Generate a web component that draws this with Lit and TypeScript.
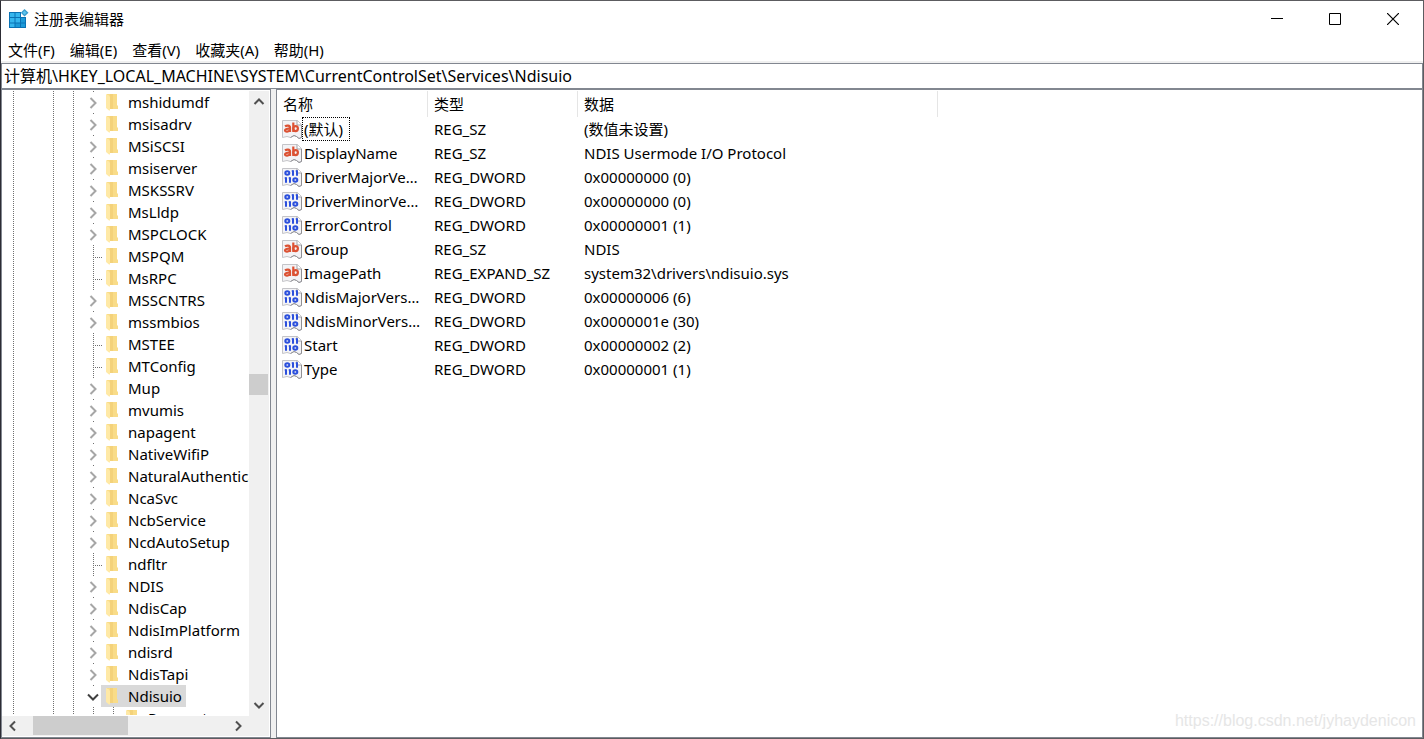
import { LitElement, html, svg, css } from "lit";
import { customElement, property } from "lit/decorators.js";
import { classMap } from "lit/directives/class-map.js";

type TreeNode = { name: string; kind: "closed" | "open" | "leaf"; child?: boolean };
type RegValue = { name: string; type: string; data: string };

const closed = (name: string): TreeNode => ({ name, kind: "closed" });
const leaf = (name: string): TreeNode => ({ name, kind: "leaf" });

const NODES: TreeNode[] = [
  closed("mshidumdf"),
  closed("msisadrv"),
  closed("MSiSCSI"),
  closed("msiserver"),
  closed("MSKSSRV"),
  closed("MsLldp"),
  closed("MSPCLOCK"),
  leaf("MSPQM"),
  leaf("MsRPC"),
  closed("MSSCNTRS"),
  closed("mssmbios"),
  leaf("MSTEE"),
  leaf("MTConfig"),
  closed("Mup"),
  closed("mvumis"),
  closed("napagent"),
  closed("NativeWifiP"),
  closed("NaturalAuthentication"),
  closed("NcaSvc"),
  closed("NcbService"),
  closed("NcdAutoSetup"),
  leaf("ndfltr"),
  closed("NDIS"),
  closed("NdisCap"),
  closed("NdisImPlatform"),
  closed("ndisrd"),
  closed("NdisTapi"),
  { name: "Ndisuio", kind: "open" },
  { name: "Parameters", kind: "leaf", child: true },
];

const VALUES: RegValue[] = [
  { name: "(默认)", type: "REG_SZ", data: "(数值未设置)" },
  { name: "DisplayName", type: "REG_SZ", data: "NDIS Usermode I/O Protocol" },
  { name: "DriverMajorVersion", type: "REG_DWORD", data: "0x00000000 (0)" },
  { name: "DriverMinorVersion", type: "REG_DWORD", data: "0x00000000 (0)" },
  { name: "ErrorControl", type: "REG_DWORD", data: "0x00000001 (1)" },
  { name: "Group", type: "REG_SZ", data: "NDIS" },
  { name: "ImagePath", type: "REG_EXPAND_SZ", data: "system32\\drivers\\ndisuio.sys" },
  { name: "NdisMajorVersion", type: "REG_DWORD", data: "0x00000006 (6)" },
  { name: "NdisMinorVersion", type: "REG_DWORD", data: "0x0000001e (30)" },
  { name: "Start", type: "REG_DWORD", data: "0x00000002 (2)" },
  { name: "Type", type: "REG_DWORD", data: "0x00000001 (1)" },
];

const base = css`
  :host {
    box-sizing: border-box;
    font: 15px/22px "Noto Sans", "Noto Sans CJK SC", sans-serif;
    color: #000;
  }
  *,
  *::before {
    box-sizing: border-box;
  }
  button {
    margin: 0;
    padding: 0;
    border: 0;
    background: none;
    color: inherit;
    font: inherit;
  }
  svg {
    display: block;
    flex: none;
  }
`;

const folderIcon = html`<svg width="12" height="18" viewBox="0 0 12 18" aria-hidden="true">
  <path d="M1 1H11V12L12 13V16H1Z" fill="#f9dc88" />
  <path d="M4 1H7V16H4Z" fill="#f4d27a" />
  <path d="M0 1L3 2.5L4 4V17.5L3 17.5L0 15Z" fill="#ffe9a6" />
</svg>`;

const page = svg`
  <path d="M.5 1.5H15.5L19.5 5.5V18.5L17 19.5L14.5 17.5L12 16.5L8.5 18.5L5 17.5L.5 18.5Z" fill="#f3f3f6" stroke="#c4c4c8"/>
  <path d="M15 1.5V6H19.5" fill="#fff" stroke="#a4a4a8"/>
  <path d="M19.5 6V18.5L17 19.5L14.5 17.5L12 16.5L8.5 18.5" fill="none" stroke="#909094"/>`;

const stringIcon = html`<svg width="20" height="20" viewBox="0 0 20 20" aria-hidden="true">
  ${page}
  <g fill="none" stroke="#dc5234" stroke-width="2.2">
    <path d="M3 7.3C4.5 6.3 8 6 8 8.5V13M8 9.8C5 9.5 3 10 3 11.3C3 13.3 7 12.8 8 11" />
    <path d="M11.3 3.5V13" />
    <ellipse cx="13.6" cy="9.6" rx="2.3" ry="2.5" />
  </g>
</svg>`;

const binaryIcon = html`<svg width="20" height="20" viewBox="0 0 20 20" aria-hidden="true">
  ${page}
  <g fill="none" stroke="#2c50dc" stroke-width="2">
    <ellipse cx="5.3" cy="6" rx="2" ry="1.7" />
    <path d="M11 3.3V8.7M15 3.3V8.7" />
    <path d="M4 10.3V15.7M8 10.3V15.7" />
    <ellipse cx="13.3" cy="13" rx="2" ry="1.7" />
    <path d="M9.6 4H11M13.6 4H15M2.6 11H4M6.6 11H8" stroke-width="1" />
  </g>
</svg>`;

const regeditIcon = html`<svg width="20" height="20" viewBox="0 0 20 20" aria-hidden="true">
  <path d="M0 3H12V8H17V19H0Z" fill="#0a72b4" />
  <path
    d="M1 4H5.5V8H1ZM6.5 4H11V8H6.5ZM1 9H5.5V13.5H1ZM6.5 9H11V13.5H6.5ZM1 14.5H5.5V18H1Z"
    fill="#35b6ee"
  />
  <path d="M6.5 14.5H11V18H6.5ZM12 14.5H16V18H12ZM12 9H16V13.5H12Z" fill="#1c9ad8" />
  <path d="M15.5 0L19.5 3.8L15.5 7.6L11.8 3.8Z" fill="#3a9ccc" />
  <path d="M15.5 1.8L17.6 3.8L15.5 5.8L13.5 3.8Z" fill="#5cc4ee" />
</svg>`;

@customElement("reg-scrollbar")
export class RegScrollbar extends LitElement {
  @property({ type: Boolean, reflect: true }) horizontal = false;
  @property({ type: Number }) before = 0;
  @property({ type: Number }) size = 0;

  static styles = [
    base,
    css`
      :host {
        display: flex;
        flex-direction: column;
        background: #f0f0f0;
        width: 20px;
      }
      :host([horizontal]) {
        flex-direction: row;
        width: auto;
        height: 20px;
      }
      .arrow {
        flex: none;
        display: grid;
        place-items: center;
        width: 19px;
        height: 22px;
      }
      :host([horizontal]) .arrow {
        width: 22px;
        height: 20px;
      }
      .track {
        flex: 1;
        display: flex;
        flex-direction: inherit;
        align-items: stretch;
      }
      .thumb {
        margin-right: 1px;
        background: #cdcdcd;
      }
      :host([horizontal]) .thumb {
        margin: 0 0 1px;
      }
    `,
  ];

  private arrow(d: string, label: string) {
    return html`<button class="arrow" aria-label=${label}>
      <svg width="12" height="12" viewBox="0 0 12 12">
        <path d=${d} fill="none" stroke="#505050" stroke-width="2" />
      </svg>
    </button>`;
  }

  render() {
    const h = this.horizontal;
    return html`
      ${h ? this.arrow("M8 1.5L3.5 6L8 10.5", "向左") : this.arrow("M1.5 8L6 3.5L10.5 8", "向上")}
      <div class="track">
        <div style="flex: ${this.before} 0 0"></div>
        <div class="thumb" style="flex: ${this.size} 0 0"></div>
        <div style="flex: ${100 - this.before - this.size} 0 0"></div>
      </div>
      ${h ? this.arrow("M4 1.5L8.5 6L4 10.5", "向右") : this.arrow("M1.5 4L6 8.5L10.5 4", "向下")}
    `;
  }
}

@customElement("reg-tree")
export class RegTree extends LitElement {
  static styles = [
    base,
    css`
      :host {
        display: grid;
        grid-template: minmax(0, 1fr) auto / minmax(0, 1fr) auto;
        border: 1px solid #828790;
        padding: 1px 1px 1px 0;
        min-height: 0;
      }
      .tree {
        overflow: hidden;
        list-style: none;
        margin: 0;
        padding: 0 0 0 1px;
        border-bottom: 1px solid #fff;
      }
      .row {
        display: flex;
        height: 22px;
        white-space: nowrap;
      }
      .cell {
        position: relative;
        flex: none;
        width: 20px;
      }
      .line::before {
        content: "";
        position: absolute;
        inset: 0 auto 0 10px;
        width: 1px;
        background: repeating-linear-gradient(#707070 0 1px, transparent 1px 2px);
      }
      .twist {
        width: 18px;
      }
      .stub::before {
        bottom: auto;
        height: 1px;
      }
      .tick {
        position: absolute;
        top: 12px;
        left: 12px;
        width: 7px;
        height: 1px;
        background: repeating-linear-gradient(90deg, #707070 0 1px, transparent 1px 2px);
      }
      .toggle {
        display: grid;
        place-items: center;
        width: 20px;
        height: 22px;
        padding-top: 2px;
      }
      .label {
        display: flex;
        align-items: center;
        gap: 10px;
        padding: 0 4px 0 5px;
      }
      .selected {
        background: #d9d9d9;
      }
      .corner {
        background: #f0f0f0;
      }
    `,
  ];

  private twist(node: TreeNode) {
    if (node.kind === "leaf") {
      return html`<span class="cell twist line">${node.child ? "" : html`<i class="tick"></i>`}</span>`;
    }
    const open = node.kind === "open";
    return html`<span class="cell twist line stub">
      <button class="toggle" aria-label=${open ? "折叠" : "展开"}>
        <svg width="12" height="12" viewBox="0 0 12 12">
          <path
            d=${open ? "M1 3.5L6 8.5L11 3.5" : "M3.5 1L8.5 6L3.5 11"}
            fill="none"
            stroke=${open ? "#404040" : "#a6a6a6"}
            stroke-width="2"
          />
        </svg>
      </button>
    </span>`;
  }

  render() {
    return html`
      <ul class="tree" role="tree">
        ${NODES.map(
          (n) => html`<li class="row" role="treeitem" aria-selected=${n.kind === "open"}>
            <span class="cell line"></span><span class="cell"></span><span class="cell line"></span
            ><span class="cell line"></span>${n.child ? html`<span class="cell line"></span>` : ""}
            ${this.twist(n)}
            <span class=${classMap({ label: true, selected: n.kind === "open" })}>${folderIcon}<span>${n.name}</span></span>
          </li>`
        )}
      </ul>
      <reg-scrollbar .before=${45} .size=${3.6}></reg-scrollbar>
      <reg-scrollbar horizontal .before=${4.4} .size=${47}></reg-scrollbar>
      <div class="corner"></div>
    `;
  }
}

@customElement("reg-values")
export class RegValues extends LitElement {
  static styles = [
    base,
    css`
      :host {
        display: block;
        border: 1px solid #828790;
        padding-top: 1px;
        overflow: hidden;
      }
      .values {
        width: 100%;
        table-layout: fixed;
        border-collapse: separate;
        border-spacing: 0;
      }
      .name {
        width: 151px;
      }
      .type {
        width: 150px;
      }
      .data {
        width: 360px;
      }
      th {
        height: 26px;
        padding: 0 6px;
        text-align: left;
        font-weight: 400;
        border-right: 1px solid #e5e5e5;
      }
      th:last-child {
        border: 0;
      }
      td {
        height: 24px;
        padding: 0 6px;
        white-space: nowrap;
      }
      td:first-child {
        padding: 0 5px;
      }
      .entry {
        display: flex;
        align-items: center;
      }
      .text {
        height: 24px;
        line-height: 24px;
        padding: 0 0 0 2px;
        overflow: hidden;
        text-overflow: ellipsis;
      }
      .focused {
        line-height: 22px;
        border: 1px dotted #000;
        padding: 0 6px 0 1px;
      }
    `,
  ];

  render() {
    return html`<table class="values">
      <thead>
        <tr>
          <th class="name">名称</th>
          <th class="type">类型</th>
          <th class="data">数据</th>
          <th></th>
        </tr>
      </thead>
      <tbody>
        ${VALUES.map(
          (v, i) => html`<tr>
            <td>
              <div class="entry">
                ${v.type === "REG_DWORD" ? binaryIcon : stringIcon}
                <span class=${classMap({ text: true, focused: i === 0 })}>${v.name}</span>
              </div>
            </td>
            <td>${v.type}</td>
            <td>${v.data}</td>
            <td></td>
          </tr>`
        )}
      </tbody>
    </table>`;
  }
}

@customElement("app-root")
export class AppRoot extends LitElement {
  static styles = [
    base,
    css`
      :host {
        display: flex;
        flex-direction: column;
        position: relative;
        height: 100vh;
        background: #fff;
        border: 1px solid #5c5c60;
        border-left-color: #2c2c34;
      }
      .titlebar {
        display: flex;
        align-items: center;
        gap: 5px;
        height: 36px;
        padding: 0 1px 0 8px;
      }
      .title {
        flex: 1;
        margin: 0;
        font: inherit;
      }
      .controls {
        display: flex;
        height: 100%;
      }
      .control {
        display: grid;
        place-items: center;
        width: 58px;
      }
      .menu {
        display: flex;
        gap: 15px;
        height: 26px;
        padding: 2px 7px 0;
        border-bottom: 2px solid #f0f0f0;
      }
      .address {
        height: 26px;
        margin: 0;
        padding: 0 2px 2px;
        border: 1px solid #828790;
        border-radius: 0;
        outline: 0;
        font: inherit;
        font-size: 16px;
        color: inherit;
        background: #fff;
      }
      .panes {
        flex: 1;
        min-height: 0;
        display: grid;
        grid-template-columns: 270px minmax(0, 1fr);
        gap: 5px;
        background: #f0f0f0;
      }
      .pane {
        background: #fff;
      }
      .watermark {
        position: absolute;
        right: 7px;
        bottom: 6px;
        font: 16px/22px "Liberation Sans", sans-serif;
        color: #e6e6e6;
      }
    `,
  ];

  render() {
    return html`
      <header class="titlebar">
        ${regeditIcon}
        <h1 class="title">注册表编辑器</h1>
        <div class="controls">
          <button class="control" aria-label="最小化">
            <svg width="12" height="12" viewBox="0 0 12 12"><path d="M0 5.5H12" stroke="#000" /></svg>
          </button>
          <button class="control" aria-label="最大化">
            <svg width="12" height="12" viewBox="0 0 12 12">
              <path d="M.5 .5H11.5V11.5H.5Z" fill="none" stroke="#000" />
            </svg>
          </button>
          <button class="control" aria-label="关闭">
            <svg width="12" height="12" viewBox="0 0 12 12">
              <path d="M0 0L12 12M12 0L0 12" stroke="#000" stroke-width="1.2" />
            </svg>
          </button>
        </div>
      </header>
      <nav class="menu">
        ${["文件(F)", "编辑(E)", "查看(V)", "收藏夹(A)", "帮助(H)"].map((m) => html`<button>${m}</button>`)}
      </nav>
      <input
        class="address"
        aria-label="地址"
        .value=${"计算机\\HKEY_LOCAL_MACHINE\\SYSTEM\\CurrentControlSet\\Services\\Ndisuio"}
      />
      <main class="panes">
        <reg-tree class="pane"></reg-tree>
        <reg-values class="pane"></reg-values>
      </main>
      <span class="watermark">https://blog.csdn.net/jyhaydenicon</span>
    `;
  }
}
